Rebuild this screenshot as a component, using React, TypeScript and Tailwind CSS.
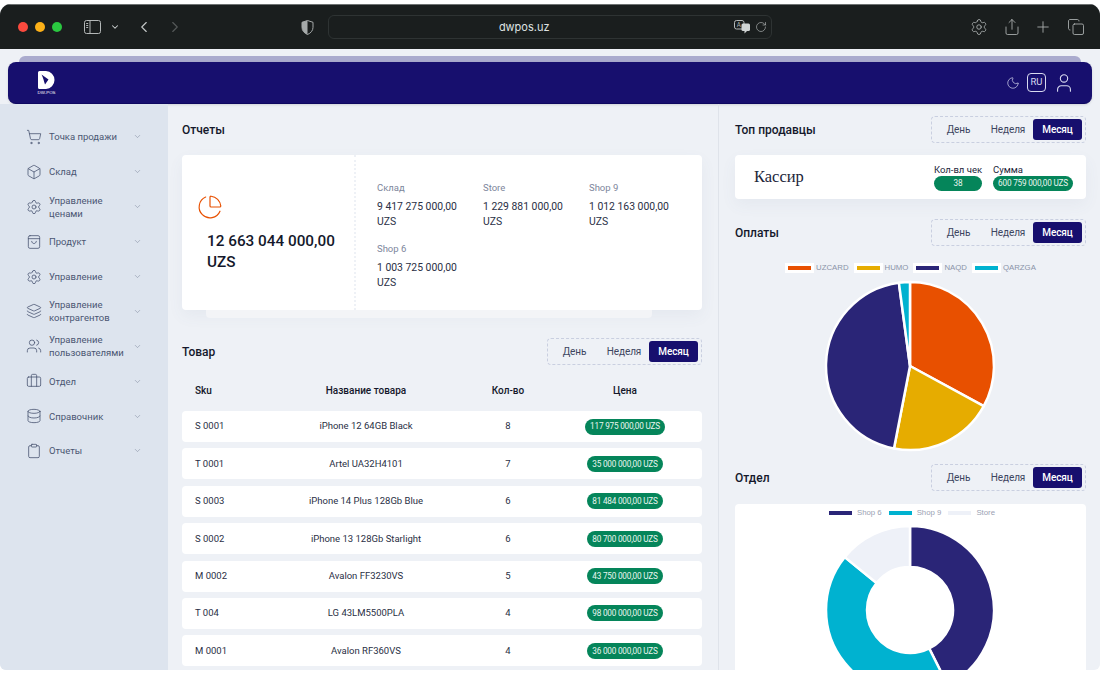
import {
  Box,
  Briefcase,
  ChartPie,
  ChevronDown,
  ChevronLeft,
  ChevronRight,
  Clipboard,
  Copy,
  Database,
  Layers,
  Moon,
  Plus,
  RotateCw,
  Settings,
  Share,
  ShoppingCart,
  User,
  Users,
} from "lucide-react";

const colors = {
  orange: "#e85000",
  yellow: "#e6ac00",
  navy: "#2a2577",
  cyan: "#00b2d0",
  pale: "#eef1f8",
};

function BagIcon({ size, strokeWidth }: { size: number; strokeWidth: number }) {
  return (
    <svg width={size} height={size} viewBox="0 0 24 24" fill="none" stroke="currentColor" strokeWidth={strokeWidth} strokeLinecap="round" strokeLinejoin="round">
      <rect x="3.5" y="2.5" width="17" height="19" rx="2.5" />
      <path d="M3.5 7h17" />
      <path d="M8.5 11c.5 2.2 1.8 3.3 3.5 3.3s3-1.1 3.5-3.3" />
    </svg>
  );
}

const navItems = [
  { label: ["Точка продажи"], icon: ShoppingCart },
  { label: ["Склад"], icon: Box },
  { label: ["Управление", "ценами"], icon: Settings },
  { label: ["Продукт"], icon: BagIcon },
  { label: ["Управление"], icon: Settings },
  { label: ["Управление", "контрагентов"], icon: Layers },
  { label: ["Управление", "пользователями"], icon: Users },
  { label: ["Отдел"], icon: Briefcase },
  { label: ["Справочник"], icon: Database },
  { label: ["Отчеты"], icon: Clipboard },
];

const products = [
  { sku: "S 0001", name: "iPhone 12 64GB Black", qty: 8, price: "117 975 000,00 UZS" },
  { sku: "T 0001", name: "Artel UA32H4101", qty: 7, price: "35 000 000,00 UZS" },
  { sku: "S 0003", name: "iPhone 14 Plus 128Gb Blue", qty: 6, price: "81 484 000,00 UZS" },
  { sku: "S 0002", name: "iPhone 13 128Gb Starlight", qty: 6, price: "80 700 000,00 UZS" },
  { sku: "M 0002", name: "Avalon FF3230VS", qty: 5, price: "43 750 000,00 UZS" },
  { sku: "T 004", name: "LG 43LM5500PLA", qty: 4, price: "98 000 000,00 UZS" },
  { sku: "M 0001", name: "Avalon RF360VS", qty: 4, price: "36 000 000,00 UZS" },
];

const shops = [
  { name: "Склад", sum: "9 417 275 000,00" },
  { name: "Store", sum: "1 229 881 000,00" },
  { name: "Shop 9", sum: "1 012 163 000,00" },
  { name: "Shop 6", sum: "1 003 725 000,00" },
];

// angles are degrees clockwise from the top
function point(r: number, deg: number) {
  const a = (deg * Math.PI) / 180;
  return `${(86 + r * Math.sin(a)).toFixed(2)} ${(86 - r * Math.cos(a)).toFixed(2)}`;
}

function slice(from: number, to: number, r: number, inner: number) {
  const large = to - from > 180 ? 1 : 0;
  if (!inner) return `M86 86L${point(r, from)}A${r} ${r} 0 ${large} 1 ${point(r, to)}Z`;
  return `M${point(inner, from)}L${point(r, from)}A${r} ${r} 0 ${large} 1 ${point(r, to)}L${point(inner, to)}A${inner} ${inner} 0 ${large} 0 ${point(inner, from)}Z`;
}

function Chart({ parts, inner = 0 }: { parts: { from: number; to: number; color: string }[]; inner?: number }) {
  return (
    <svg width="172" height="172" viewBox="0 0 172 172">
      {parts.map((p) => (
        <path key={p.from} d={slice(p.from, p.to, 84, inner)} fill={p.color} stroke="#ffffff" strokeWidth="2.5" strokeLinejoin="round" />
      ))}
    </svg>
  );
}

function Toggle() {
  return (
    <div className="flex h-[27px] w-[155px] items-center justify-end rounded border border-dashed border-[#c9cfe0] pr-[3px] text-[10px] tracking-[-0.1px] text-[#3d4560]">
      <span className="w-[49px] text-center">День</span>
      <span className="w-[50px] text-center">Неделя</span>
      <span className="flex h-[21px] w-[49px] items-center justify-center rounded-[3px] bg-[#170f6e] font-medium text-white">Месяц</span>
    </div>
  );
}

function SectionHead({ title }: { title: string }) {
  return (
    <div className="flex h-[27px] items-center justify-between">
      <h2 className="text-[12px] font-medium text-[#14182b]">{title}</h2>
      <Toggle />
    </div>
  );
}

function Pill({ children, className }: { children: React.ReactNode; className: string }) {
  return (
    <span className={`flex items-center justify-center rounded-full bg-[#05855a] text-[8.2px] tracking-[-0.2px] text-[#e8f5ef] ${className}`}>
      {children}
    </span>
  );
}

function Toolbar() {
  return (
    <div className="flex h-[45px] shrink-0 items-center border-t border-[#6e7272] bg-[#1a1e1e] text-[#b4b8b8]">
      <div className="ml-[17.5px] flex gap-[7.2px]">
        <span className="h-[10px] w-[10px] rounded-full bg-[#fb4a3e]" />
        <span className="h-[10px] w-[10px] rounded-full bg-[#fcb018]" />
        <span className="h-[10px] w-[10px] rounded-full bg-[#2ac840]" />
      </div>
      <svg className="ml-[22px]" width="17" height="14" viewBox="0 0 17 14" fill="none" stroke="currentColor" strokeWidth="1">
        <rect x="0.5" y="0.5" width="16" height="13" rx="2" />
        <path d="M6 .5v13M2.2 3.5h2M2.2 5.5h2M2.2 7.5h2" />
      </svg>
      <ChevronDown className="ml-[9px] text-[#d0d4d4]" size={10} strokeWidth={2.5} />
      <ChevronLeft className="ml-[15px] text-[#c4c8c8]" size={18} strokeWidth={1.5} />
      <ChevronRight className="ml-[13px] text-[#555959]" size={18} strokeWidth={1.5} />
      <svg className="ml-[117.5px]" width="13" height="15" viewBox="0 0 13 15">
        <path d="M6.5.5 12 2.3v5c0 3.4-2.2 5.8-5.5 7.2C3.2 13.1 1 10.7 1 7.3v-5z" fill="none" stroke="#a6aaaa" />
        <path d="M6.5.5 1 2.3v5c0 3.4 2.2 5.8 5.5 7.2z" fill="#a6aaaa" />
      </svg>
      <div className="relative ml-[13.5px] flex h-[24px] w-[444px] items-center rounded-md border border-[#2e3333] pl-[170px] text-[11px] text-[#dfe2e2] [font-family:Inter,sans-serif]">
        dwpos.uz
        <svg className="absolute right-[20px] top-[4px]" width="17" height="14" viewBox="0 0 17 14">
          <rect x="0.5" y="0.5" width="9.5" height="8.5" rx="2" fill="none" stroke="#b4b8b8" />
          <text x="2.8" y="7" fontSize="6" fill="#b4b8b8">A</text>
          <rect x="7.5" y="3.5" width="8.5" height="7.5" rx="1.5" fill="#d0d4d4" />
          <path d="M10.5 11v2.5l2.5-2.5z" fill="#d0d4d4" />
        </svg>
        <RotateCw className="absolute right-[4px] top-[5px] text-[#b4b8b8]" size={12} strokeWidth={1.3} />
      </div>
      <Settings className="ml-[198px]" size={18} strokeWidth={1.1} />
      <Share className="ml-[15px]" size={18} strokeWidth={1.1} />
      <Plus className="ml-[13px]" size={18} strokeWidth={1.1} />
      <Copy className="ml-[15px]" size={18} strokeWidth={1.1} />
    </div>
  );
}

function Header() {
  return (
    <div className="shrink-0 pt-[7px]">
      <div className="mx-[19px] h-[6px] rounded-t-md bg-[#aaabce]" />
      <div className="mx-[8px] flex h-[42px] items-center rounded-lg border-b border-[#0e0860] bg-[#170f6e] pr-[17px] shadow-sm">
        <div className="ml-[29px] flex w-[19px] flex-col items-center">
          <svg width="17" height="18" viewBox="0 0 17 18">
            <path d="M0 1.5A1.5 1.5 0 0 1 1.5 0H8a8.5 9 0 0 1 0 18H1.5A1.5 1.5 0 0 1 0 16.5z" fill="#ffffff" />
            <path d="M3.5 3.5 10.5 8.5 7 13.5C6 10 5 6.5 3.5 3.5z" fill="#170f6e" />
          </svg>
          <span className="mt-[1px] whitespace-nowrap text-[4.4px] leading-[5px] text-white [font-family:'Liberation_Sans',sans-serif]">DW-POS</span>
        </div>
        <div className="ml-auto flex items-center text-[#d8daf0]">
          <Moon size={14} strokeWidth={1.2} />
          <span className="ml-[7px] flex h-[19px] w-[19px] items-center justify-center rounded border border-[#d8daf0] text-[9.5px]">RU</span>
          <User className="ml-[7px]" size={22} strokeWidth={1.2} />
        </div>
      </div>
    </div>
  );
}

function Sidebar() {
  return (
    <aside className="w-[168px] shrink-0 bg-[#dde4ee] pt-[15.5px] pl-[26px] pr-[26px]">
      {navItems.map((item, i) => {
        const Icon = item.icon;
        return (
          <div key={i} className="flex h-[34.9px] items-center text-[#4a5672]">
            <span className="flex w-[16px] justify-center"><Icon size={16} strokeWidth={1.2} /></span>
            <span className="ml-[7px] flex-1 text-[9.5px] leading-[13px]">
              {item.label.map((line) => (
                <span key={line} className="block whitespace-nowrap">{line}</span>
              ))}
            </span>
            <ChevronDown className="text-[#7d879c]" size={9} strokeWidth={1.4} />
          </div>
        );
      })}
    </aside>
  );
}

function Reports() {
  return (
    <>
      <div className="flex h-[27px] items-center">
        <h2 className="text-[12px] font-medium text-[#14182b]">Отчеты</h2>
      </div>
      <div className="mt-[12px] flex h-[155px] rounded bg-white shadow-[0_6px_16px_rgba(90,100,140,0.06)]">
        <div className="w-[174px] shrink-0 border-r-2 border-dotted border-[#eef1f6] pt-[39px] pl-[15px]">
          <ChartPie className="text-[#e85000]" size={26} strokeWidth={1.1} />
          <div className="mt-[11px] ml-[10px] text-[15.3px] font-medium leading-[21px] text-[#14182b]">
            12 663 044 000,00
            <br />
            UZS
          </div>
        </div>
        <div className="grid flex-1 grid-cols-[106px_106px_106px] content-start gap-y-[11.5px] pt-[25px] pl-[21px]">
          {shops.map((shop) => (
            <div key={shop.name}>
              <div className="text-[9.5px] leading-[16px] text-[#7d869c]">{shop.name}</div>
              <div className="mt-[2.5px] text-[10.4px] leading-[15.5px] text-[#2a2f45]">
                {shop.sum}
                <br />
                UZS
              </div>
            </div>
          ))}
        </div>
      </div>
      <div className="ml-[24px] mr-[50px] h-[8px] rounded-b bg-[#f3f4f7]" />
    </>
  );
}

function Products() {
  return (
    <div className="mt-[20px]">
      <SectionHead title="Товар" />
      <div className="mt-[12px] grid h-[26px] grid-cols-[62px_244px_40px_174px] items-center text-center text-[10px] font-medium text-[#14182b]">
        <span className="pl-[13px] text-left">Sku</span>
        <span>Название товара</span>
        <span>Кол-во</span>
        <span className="pl-[20px]">Цена</span>
      </div>
      <div className="mt-[8px] flex flex-col gap-[6.4px]">
        {products.map((p) => (
          <div key={p.sku} className="grid h-[31px] shrink-0 grid-cols-[62px_244px_40px_174px] items-center rounded bg-white text-center text-[9.5px] text-[#2a2f45]">
            <span className="whitespace-nowrap pl-[13px] text-left">{p.sku}</span>
            <span>{p.name}</span>
            <span>{p.qty}</span>
            <span className="flex justify-center pl-[20px]">
              <Pill className="h-[16px] px-[5.5px]">{p.price}</Pill>
            </span>
          </div>
        ))}
      </div>
    </div>
  );
}

function LegendItem({ color, label, framed }: { color: string; label: string; framed?: boolean }) {
  return (
    <span className={`flex items-center ${framed ? "text-[#8a93a8]" : "text-[#9aa1b3]"}`}>
      <span className={`flex h-[10px] w-[29px] items-center justify-center ${framed ? "bg-white" : ""}`}>
        <span className="block h-[4.5px] w-[23px]" style={{ background: color }} />
      </span>
      <span className="ml-[2px]">{label}</span>
    </span>
  );
}

function RightColumn() {
  return (
    <section className="flex-1 pt-[12px] pl-[16px] pr-[14px]">
      <SectionHead title="Топ продавцы" />
      <div className="mt-[12px] flex h-[44px] items-center rounded bg-white pl-[19px] shadow-[0_6px_16px_rgba(90,100,140,0.06)]">
        <span className="flex-1 text-[16.5px] text-[#22263a] [font-family:'Liberation_Serif',serif]">Кассир</span>
        <div className="w-[48px] whitespace-nowrap text-[9.5px] leading-[13px] text-[#22263a]">
          Кол-вл чек
          <Pill className="h-[15px]">38</Pill>
        </div>
        <div className="ml-[11px] mr-[13px] w-[80px] text-[9.5px] leading-[13px] text-[#22263a]">
          Сумма
          <Pill className="h-[15px] whitespace-nowrap">600 759 000,00 UZS</Pill>
        </div>
      </div>

      <div className="mt-[20px]">
        <SectionHead title="Оплаты" />
      </div>
      <div className="mt-[16px] flex h-[12px] items-center justify-center gap-[5px] text-[7.8px] [font-family:'Liberation_Sans',sans-serif]">
        <LegendItem framed color={colors.orange} label="UZCARD" />
        <LegendItem framed color={colors.yellow} label="HUMO" />
        <LegendItem framed color={colors.navy} label="NAQD" />
        <LegendItem framed color={colors.cyan} label="QARZGA" />
      </div>
      <div className="mt-[6px] flex justify-center pr-[1px]">
        <Chart
          parts={[
            { from: 0, to: 118.6, color: colors.orange },
            { from: 118.6, to: 191, color: colors.yellow },
            { from: 191, to: 352.4, color: colors.navy },
            { from: 352.4, to: 360, color: colors.cyan },
          ]}
        />
      </div>

      <div className="mt-[12px]">
        <SectionHead title="Отдел" />
      </div>
      <div className="mt-[13px] rounded bg-white pb-[40px]">
        <div className="flex h-[18px] items-center justify-center gap-[4px] text-[7.8px] [font-family:'Liberation_Sans',sans-serif]">
          <LegendItem color={colors.navy} label="Shop 6" />
          <LegendItem color={colors.cyan} label="Shop 9" />
          <LegendItem color={colors.pale} label="Store" />
        </div>
        <div className="mt-[2px] flex justify-center pr-[1px]">
          <Chart
            inner={43}
            parts={[
              { from: 0, to: 153.4, color: colors.navy },
              { from: 153.4, to: 309, color: colors.cyan },
              { from: 309, to: 360, color: colors.pale },
            ]}
          />
        </div>
      </div>
    </section>
  );
}

export default function App() {
  return (
    <div className="h-[688px] w-[1100px] overflow-hidden bg-white pt-[4px] [font-family:Roboto,sans-serif]">
      <div className="flex h-[666px] flex-col overflow-hidden rounded-t-[11px] rounded-b-[6px] bg-[#eef1f6]">
        <Toolbar />
        <Header />
        <div className="flex min-h-0 flex-1 overflow-hidden">
          <Sidebar />
          <main className="w-[551px] shrink-0 border-r border-[#dfe3ea] pt-[12px] pl-[14px] pr-[16px]">
            <Reports />
            <Products />
          </main>
          <RightColumn />
        </div>
      </div>
    </div>
  );
}
